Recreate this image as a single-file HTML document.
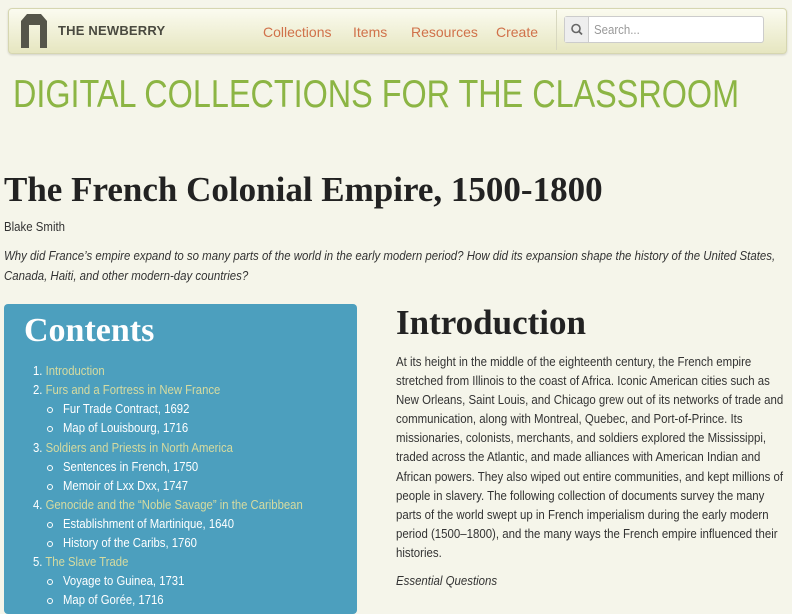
<!DOCTYPE html>
<html><head><meta charset="utf-8"><style>
*{margin:0;padding:0;box-sizing:border-box}
body{width:792px;height:600px;overflow:hidden;background:#f5f5ea;font-family:"Liberation Sans",sans-serif;color:#333;position:relative}
.c{transform-origin:0 0;transform:scaleX(.88)}
.nav{position:absolute;left:8px;top:8px;width:779px;height:46px;border:1px solid #d6d6b0;border-radius:4px;background:linear-gradient(#fbfbf0,#e6e6c0);box-shadow:0 1px 2px rgba(0,0,0,.15)}
.logo{position:absolute;left:11px;top:5px}
.brand{position:absolute;left:49px;top:14px;font-weight:bold;font-size:13px;color:#4a4a40;letter-spacing:.2px}
.links a{position:absolute;top:15px;font-size:14px;color:#d0714a;text-decoration:none;white-space:nowrap}
.sep{position:absolute;left:547px;top:1px;width:1px;height:40px;background:#d8d8c0}
.search{position:absolute;left:555px;top:7px;width:200px;height:27px;border:1px solid #ccc;border-radius:3px;background:#fff}
.search .ic{position:absolute;left:0;top:0;width:24px;height:25px;background:#eee;border-right:1px solid #ccc}
.search span{position:absolute;left:29px;top:5px;font-size:13px;color:#999}
h1.site{position:absolute;left:13px;top:73px;font-weight:normal;font-size:39px;color:#8cb544;white-space:nowrap;transform-origin:0 0;transform:scaleX(.83)}
h2.t{position:absolute;left:4px;top:170px;font-family:"Liberation Serif",serif;font-size:35px;font-weight:bold;color:#222;white-space:nowrap}
.auth{position:absolute;left:4px;top:219px;font-size:13px}
.q{position:absolute;left:4px;top:246px;font-size:13px;font-style:italic;line-height:20px;white-space:nowrap}
.box{position:absolute;left:4px;top:304px;width:353px;height:310px;background:#4c9fbe;border-radius:4px}
.box h3{position:absolute;left:20px;top:8px;font-family:"Liberation Serif",serif;font-weight:bold;font-size:34px;color:#fff}
.box .l{position:absolute;font-size:13px;white-space:nowrap;color:#fff;transform-origin:0 0;transform:scaleX(.87)}
.box .l b{font-weight:normal;color:#d6dba0}
.box .s{left:59px}
.bul{position:absolute;left:43px;width:6px;height:6px;border:1px solid #fff;border-radius:50%}
h2.i{position:absolute;left:396px;top:303px;font-family:"Liberation Serif",serif;font-size:35px;font-weight:bold;color:#222}
.intro{position:absolute;left:396px;top:352px;font-size:13px;line-height:19.1px;white-space:nowrap;color:#333}
.eq{position:absolute;left:396px;top:573px;font-size:13px;font-style:italic}
</style></head><body>
<div class="nav">
<svg class="logo" width="28" height="34" viewBox="0 0 28 34"><path d="M1 7 L7 0 L21 0 L27 7 L27 34 L20 34 L20 11 L9 11 L9 34 L1 34 Z" fill="#55554a"/></svg>
<div class="brand">THE NEWBERRY</div>
<div class="links"><a style="left:254px">Collections</a><a style="left:344px">Items</a><a style="left:402px">Resources</a><a style="left:487px">Create</a></div>
<div class="sep"></div>
<div class="search"><div class="ic"><svg width="24" height="25" viewBox="0 0 24 25"><circle cx="11" cy="11.5" r="4" fill="none" stroke="#666" stroke-width="1.6"/><path d="M14 14.5 L17 17.5" stroke="#666" stroke-width="1.8"/></svg></div><span class="c" style="display:block">Search...</span></div>
</div>
<h1 class="site">DIGITAL COLLECTIONS FOR THE CLASSROOM</h1>
<h2 class="t">The French Colonial Empire, 1500-1800</h2>
<div class="auth c">Blake Smith</div>
<div class="q c">Why did France’s empire expand to so many parts of the world in the early modern period? How did its expansion shape the history of the United States,<br>Canada, Haiti, and other modern-day countries?</div>
<div class="box">
<h3>Contents</h3>
<div class="l" style="left:29px;top:59px">1. <b>Introduction</b></div>
<div class="l" style="left:29px;top:78px">2. <b>Furs and a Fortress in New France</b></div>
<div class="bul" style="top:103px"></div><div class="l s" style="top:97px">Fur Trade Contract, 1692</div>
<div class="bul" style="top:122px"></div><div class="l s" style="top:116px">Map of Louisbourg, 1716</div>
<div class="l" style="left:29px;top:136px">3. <b>Soldiers and Priests in North America</b></div>
<div class="bul" style="top:161px"></div><div class="l s" style="top:155px">Sentences in French, 1750</div>
<div class="bul" style="top:180px"></div><div class="l s" style="top:174px">Memoir of Lxx Dxx, 1747</div>
<div class="l" style="left:29px;top:193px">4. <b>Genocide and the “Noble Savage” in the Caribbean</b></div>
<div class="bul" style="top:218px"></div><div class="l s" style="top:212px">Establishment of Martinique, 1640</div>
<div class="bul" style="top:237px"></div><div class="l s" style="top:231px">History of the Caribs, 1760</div>
<div class="l" style="left:29px;top:250px">5. <b>The Slave Trade</b></div>
<div class="bul" style="top:275px"></div><div class="l s" style="top:269px">Voyage to Guinea, 1731</div>
<div class="bul" style="top:294px"></div><div class="l s" style="top:288px">Map of Gorée, 1716</div>
</div>
<h2 class="i">Introduction</h2>
<div class="intro c">At its height in the middle of the eighteenth century, the French empire<br>stretched from Illinois to the coast of Africa. Iconic American cities such as<br>New Orleans, Saint Louis, and Chicago grew out of its networks of trade and<br>communication, along with Montreal, Quebec, and Port-of-Prince. Its<br>missionaries, colonists, merchants, and soldiers explored the Mississippi,<br>traded across the Atlantic, and made alliances with American Indian and<br>African powers. They also wiped out entire communities, and kept millions of<br>people in slavery. The following collection of documents survey the many<br>parts of the world swept up in French imperialism during the early modern<br>period (1500–1800), and the many ways the French empire influenced their<br>histories.</div>
<div class="eq c">Essential Questions</div>
</body></html>
